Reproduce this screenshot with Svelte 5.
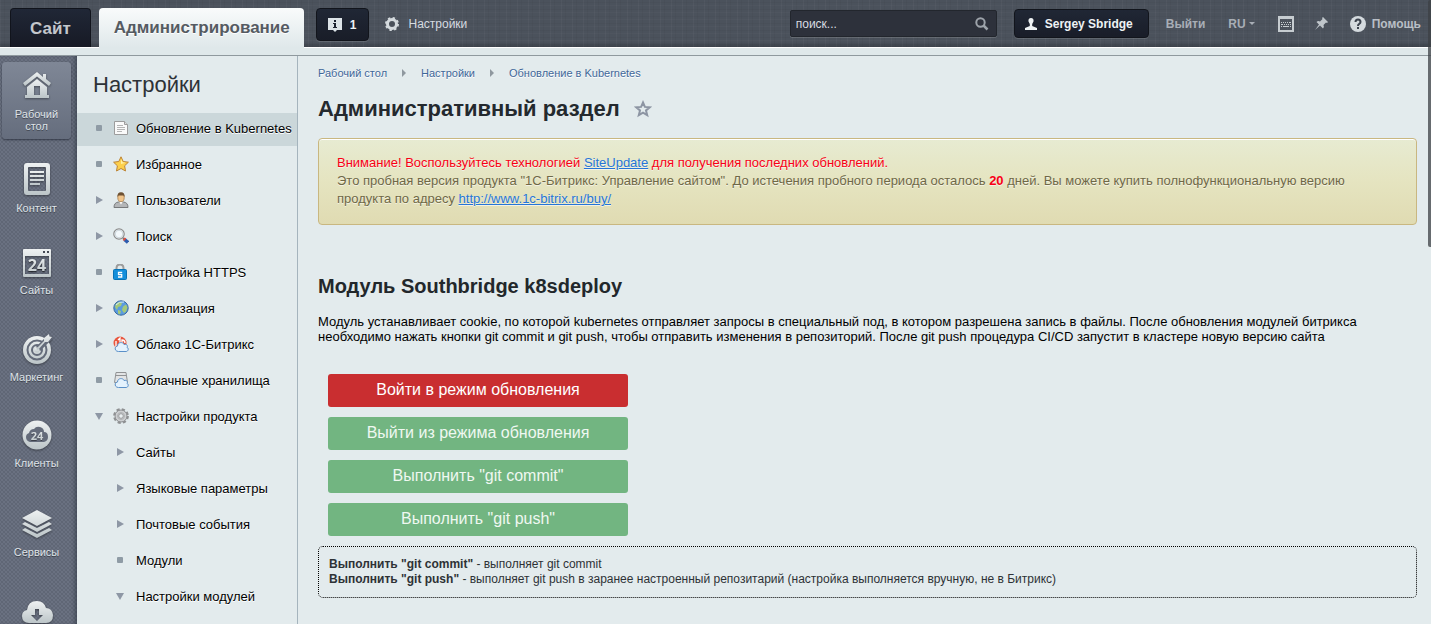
<script lang="ts">
  interface RailItem {
    label: string;
    width: number;
    height: number;
    art: string;
    active?: boolean;
  }

  interface MenuItem {
    label: string;
    marker: 'dot' | 'right' | 'down';
    icon?: string;
    sub?: boolean;
    selected?: boolean;
  }

  const rail: RailItem[] = [
    {
      label: 'Рабочий стол',
      width: 30,
      height: 28,
      active: true,
      art: '<path d="M15 1 1 12l2 3 12-9.500L27 15l2-3-5-4V3h-3v3z"/><path fill-rule="evenodd" d="M15 8 5 16v8H3v3h24v-3h-2v-8zm-3 7h6v9h-6z"/>',
    },
    {
      label: 'Контент',
      width: 28,
      height: 34,
      art: '<path fill-rule="evenodd" d="M4 1h20q3 0 3 3v26q0 3-3 3H4q-3 0-3-3V4q0-3 3-3zm2 4Q5 5 5 6v22q0 1 1 1h16q1 0 1-1V6q0-1-1-1z"/><path d="M7 9h14v2H7zm0 4h14v2H7zm0 4h14v2H7zm0 4h10v2H7z"/>',
    },
    {
      label: 'Сайты',
      width: 30,
      height: 32,
      art: '<path fill-rule="evenodd" d="M2 3h26q1 0 1 1v26q0 1-1 1H2q-1 0-1-1V4q0-1 1-1zm1 7v18h24V10zm18-5v2h2V5zm4 0v2h2V5z"/><text x="15" y="25" text-anchor="middle" font-size="16" font-weight="700">24</text>',
    },
    {
      label: 'Маркетинг',
      width: 30,
      height: 37,
      art: '<circle cx="15" cy="22" r="14"/><g fill="none" stroke="#646b7a" stroke-width="2"><circle cx="15" cy="22" r="9.500"/><circle cx="15" cy="22" r="5"/><path stroke-width="6" d="M16 21 28 9"/></g><circle cx="15" cy="22" r="2.500"/><path d="m14 21 8-8v-3l5-4 .5 2.500L30 9l-4 5h-3l-7 8z"/>',
    },
    {
      label: 'Клиенты',
      width: 30,
      height: 36,
      art: '<circle cx="15" cy="20" r="14.500"/><path fill="#646b7a" d="M8 27q-4-1-4-5 0-3 3-4 1-4 5-4 2-3 6-2 4 1 4 5 4 0 4 5 0 4-4 5z"/><text x="15" y="25" text-anchor="middle" font-size="11" font-weight="700">24</text>',
    },
    {
      label: 'Сервисы',
      width: 32,
      height: 39,
      art: '<path d="M16 9 1 17l15 8 15-8zM4 21l-3 2 15 8 15-8-3-2-12 6zM4 27l-3 2 15 8 15-8-3-2-12 6z"/>',
    },
    {
      label: 'Облако',
      width: 32,
      height: 34,
      art: '<path fill-rule="evenodd" d="M8 33q-7 0-7-7 0-5 5-6 1-9 10-9 7 0 9 7 6 0 7 7 0 8-7 8zm6-14v6h-4l6 6 6-6h-4v-6z"/>',
    },
  ];

  const cloud =
    '<path d="M5.500 15.500c-4 0-4.500-5-1-5.500C4.500 6 10 5.500 11 8.500c3-1 4 1.500 3 3 2 .5 1.500 4-1 4z" fill="#e4f2fd" stroke="#5a90c8"/>';

  const icons: Record<string, string> = {
    page: '<path d="M1.500 1.500h10l3 3v10h-13z" fill="#fafafa" stroke="#9c9c9c"/><path d="M11.500 1.500v3h3" fill="#ddd" stroke="#9c9c9c"/><path d="M4 5.500h6M4 7.500h8M4 9.500h8M4 11.500h5" stroke="#b5b5b5"/>',
    star: '<path d="m8 .8 2.200 4.700 5.200.7-3.800 3.600.9 5.200L8 12.500 3.500 15l.9-5.200L.6 6.200l5.200-.7z" fill="#fdd04c" stroke="#bd8434"/><path d="m8 3 1.500 3.300 3.300.5L8 8z" fill="#fff0a6"/>',
    user: '<path d="M1 15.500q0-5 4.500-5.500h5q4.500.5 4.500 5.500z" fill="#b4b6b8" stroke="#77797b"/><path d="m6 9.500 2 3 2-3z" fill="#fff"/><ellipse cx="8" cy="5.500" rx="3.200" ry="4.200" fill="#f1c58c" stroke="#a87c49" stroke-width=".8"/><path d="M4.500 5Q4 .3 8 .3T11.500 5L10.500 3.500h-5z" fill="#6e5133"/>',
    search: '<path d="m10 10 1.500 1.500" stroke="#777" stroke-width="2"/><path d="m11.500 11.500 3.500 3" stroke="#2d5cae" stroke-width="3.500"/><path d="m10.500 12.500 2-2.500" stroke="#e34d3d" stroke-width="2"/><circle cx="6" cy="6" r="5.200" fill="#f3f8fb" stroke="#8c8c8c" stroke-width="1.200"/><circle cx="6" cy="6" r="3.800" fill="none" stroke="#ccd6db"/>',
    lock: '<path d="M3.500 7V4q0-3.500 3.500-3.500T10.500 4v3" fill="none" stroke="#9c9c9c" stroke-width="2"/><rect x=".5" y="5.500" width="13" height="10" rx="1" fill="#148fdb" stroke="#0872b5"/><path d="M9.200 8.500H5.500v2.200h3.200V13H5" fill="none" stroke="#fff" stroke-width="1.300"/>',
    globe: '<circle cx="8" cy="8" r="7.200" fill="#5a9be0" stroke="#38699f"/><path d="M3 3.500 6 2l3 1-1 3-3 1-1 3-2-3zm7 3 3-2 1.500 3-1.500 4-2 1.500-2-3zM5 10l3 1-1 3.500-2-1z" fill="#a5c978"/><path d="M3 5q3-4 8-3" fill="none" stroke="#d5ecfb"/>',
    bitrix: '<circle cx="7" cy="7" r="6.500" fill="#e8563e"/><path d="M3 11V5m2-1 2-2v8M9 10V4a3 3 0 0 1 3 3" fill="none" stroke="#fff" stroke-width="1.300"/>' + cloud,
    storage: '<path d="M3 .5h10l1.500 10h-13z" fill="#e2e4e5" stroke="#909294"/><path d="M3 3.500h10" stroke="#909294"/>' + cloud,
    gear: '<circle cx="8" cy="8" r="6.500" fill="none" stroke="#8f9193" stroke-width="2.800" stroke-dasharray="3 2.105"/><circle cx="8" cy="8" r="6" fill="#cdcfd1" stroke="#8d8f91"/><circle cx="8" cy="8" r="3.500" fill="none" stroke="#b0b2b4"/><circle cx="8" cy="8" r="2.300" fill="#e9eef0" stroke="#8d8f91" stroke-width=".8"/>',
  };

  const menu: MenuItem[] = [
    { label: 'Обновление в Kubernetes', marker: 'dot', icon: 'page', selected: true },
    { label: 'Избранное', marker: 'dot', icon: 'star' },
    { label: 'Пользователи', marker: 'right', icon: 'user' },
    { label: 'Поиск', marker: 'right', icon: 'search' },
    { label: 'Настройка HTTPS', marker: 'dot', icon: 'lock' },
    { label: 'Локализация', marker: 'right', icon: 'globe' },
    { label: 'Облако 1С-Битрикс', marker: 'right', icon: 'bitrix' },
    { label: 'Облачные хранилища', marker: 'dot', icon: 'storage' },
    { label: 'Настройки продукта', marker: 'down', icon: 'gear' },
    { label: 'Сайты', marker: 'right', sub: true },
    { label: 'Языковые параметры', marker: 'right', sub: true },
    { label: 'Почтовые события', marker: 'right', sub: true },
    { label: 'Модули', marker: 'dot', sub: true },
    { label: 'Настройки модулей', marker: 'down', sub: true },
  ];

  const crumbs = ['Рабочий стол', 'Настройки', 'Обновление в Kubernetes'];

  const actions = [
    { label: 'Войти в режим обновления', danger: true },
    { label: 'Выйти из режима обновления' },
    { label: 'Выполнить "git commit"' },
    { label: 'Выполнить "git push"' },
  ];

  let query = $state('');
</script>

<div class="admin">
  <header class="topbar">
    <nav class="tabs">
      <a class="tab site" href="#site">Сайт</a>
      <a class="tab current" href="#admin">Администрирование</a>
    </nav>
    <button class="dark-btn notices" type="button" aria-label="Уведомления: 1">
      <svg width="14" height="14" viewBox="0 0 14 14">
        <path d="M0 0h14v12H9l-2 2-2-2H0z" fill="#dce3e7" />
        <path d="M6 2h2v2H6zM5 5h3v4h1v1H5V9h1V6H5z" fill="#1b212e" />
      </svg>
      <span>1</span>
    </button>
    <a class="prefs" href="#settings">
      <svg width="14" height="14" viewBox="0 0 14 14" fill="none" stroke="#d4dade">
        <circle cx="7" cy="7" r="4.500" stroke-width="3" />
        <circle cx="7" cy="7" r="6" stroke-width="2" stroke-dasharray="2.350" />
      </svg>
      Настройки
    </a>

    <div class="tools">
      <div class="search">
        <input type="text" placeholder="поиск..." aria-label="Поиск" bind:value={query} />
        <svg width="14" height="14" viewBox="0 0 14 14" fill="none" stroke="#9da3aa">
          <circle cx="5.500" cy="5.500" r="4.200" stroke-width="2" />
          <path d="m8.500 8.500 4 4" stroke-width="2.500" />
        </svg>
      </div>
      <button class="dark-btn user" type="button">
        <svg width="12" height="12" viewBox="0 0 12 12" fill="#eef2f4">
          <path d="M6 0q3 0 2.500 3.500L7.200 6v2L12 10v2H0v-2l4.800-2V6L3.500 3.500Q3 0 6 0z" />
        </svg>
        Sergey Sbridge
      </button>
      <a class="tool logout" href="#logout">Выйти</a>
      <button class="tool lang" type="button">RU <i class="caret"></i></button>
      <button class="tool keyboard" type="button" aria-label="Горячие клавиши">
        <svg width="16" height="16" viewBox="0 0 16 16" fill="#c6ccd0">
          <path fill-rule="evenodd" d="M0 0h16v16H0zm2 3v11h12V3z" />
          <path d="M3 6h1v1H3zm2 0h1v1H5zm2 0h1v1H7zm2 0h1v1H9zm2 0h2v1h-2zM3 8h2v1H3zm3 0h1v1H6zm2 0h1v1H8zm2 0h1v1h-1zm2 0h1v1h-1zM3 10h1v1H3zm2 0h6v1H5zm7 0h1v1h-1z" />
        </svg>
      </button>
      <button class="tool pin" type="button" aria-label="Закрепить панель">
        <svg width="15" height="15" viewBox="0 0 15 15" fill="#c0c6cb">
          <path d="m9 1 5 5-1 1-1-.5L9.500 9q1 2-.5 3.500L6 9.500 1 14l4-5.500L2.500 6Q4 4.500 6 5.500L8.500 3 8 2z" />
        </svg>
      </button>
      <a class="tool help" href="#help">
        <svg width="16" height="16" viewBox="0 0 16 16">
          <circle cx="8" cy="8" r="8" fill="#d4dade" />
          <path d="M5.500 6q0-2.500 2.500-2.500T10.500 6q0 1-1.300 1.800Q8 8.500 8 10" fill="none" stroke="#3c434e" stroke-width="2" />
          <path d="M7 11h2v2H7z" fill="#3c434e" />
        </svg>
        Помощь
      </a>
    </div>
  </header>

  <div class="body">
    <nav class="rail">
      {#each rail as item}
        <a class="rail-item" class:active={item.active} href="#rail">
          <svg width={item.width} height={item.height} viewBox="0 0 {item.width} {item.height}" fill="url(#metal)">
            {@html item.art}
          </svg>
          <span>{item.label}</span>
        </a>
      {/each}
      <svg class="defs" width="0" height="0" aria-hidden="true">
        <linearGradient id="metal" x1="0" y1="0" x2="0" y2="1">
          <stop offset="0" stop-color="#eef1f2" />
          <stop offset="1" stop-color="#bcc5c8" />
        </linearGradient>
      </svg>
    </nav>

    <aside class="menu">
      <h2>Настройки</h2>
      <ul>
        {#each menu as item}
          <li>
            <a class="menu-item" class:selected={item.selected} class:sub={item.sub} href="#menu">
              <span class="marker"><i class={item.marker}></i></span>
              {#if item.icon}
                <svg class="menu-icon" width="16" height="16" viewBox="0 0 16 16" fill="none">
                  {@html icons[item.icon]}
                </svg>
              {/if}
              <span>{item.label}</span>
            </a>
          </li>
        {/each}
      </ul>
    </aside>

    <main class="content">
      <nav class="crumbs">
        {#each crumbs as crumb, i}
          {#if i > 0}<i class="crumb-arrow"></i>{/if}
          <a href="#crumb">{crumb}</a>
        {/each}
      </nav>

      <div class="title">
        <h1>Административный раздел</h1>
        <button class="fav" type="button" aria-label="Добавить в избранное">
          <svg width="18" height="18" viewBox="0 0 18 18" fill="none" stroke="#8d95a3" stroke-width="2">
            <path d="m9 2.500 1.900 4.400 4.800.4-3.700 3.100 1.200 4.800L9 12.600l-4.200 2.600L6 10.400 2.300 7.300l4.800-.4z" />
          </svg>
        </button>
      </div>

      <div class="notice">
        <span class="warn">
          Внимание! Воспользуйтесь технологией <a href="#siteupdate">SiteUpdate</a> для получения последних обновлений.
        </span>
        <br />
        Это пробная версия продукта "1С-Битрикс: Управление сайтом". До истечения пробного периода осталось
        <b>20</b> дней. Вы можете купить полнофункциональную версию продукта по адресу
        <a href="#buy">http://www.1c-bitrix.ru/buy/</a>
      </div>

      <h3>Модуль Southbridge k8sdeploy</h3>
      <p class="about">
        Модуль устанавливает cookie, по которой kubernetes отправляет запросы в специальный под, в котором разрешена
        запись в файлы. После обновления модулей битрикса необходимо нажать кнопки git commit и git push, чтобы
        отправить изменения в репозиторий. После git push процедура CI/CD запустит в кластере новую версию сайта
      </p>

      <div class="actions">
        {#each actions as action}
          <button class="action" class:danger={action.danger} type="button">{action.label}</button>
        {/each}
      </div>

      <div class="legend">
        <b>Выполнить "git commit"</b> - выполняет git commit<br />
        <b>Выполнить "git push"</b> - выполняет git push в заранее настроенный репозитарий (настройка выполняется вручную,
        не в Битрикс)
      </div>
    </main>
  </div>

  <div class="scroll-thumb"></div>
</div>

<style>
  :global(body) {
    overflow: hidden;
  }

  .admin {
    position: relative;
    display: flex;
    flex-direction: column;
    height: 100vh;
    overflow: hidden;
    background: #e3ebed;
    color: #000;
    font-family: 'Liberation Sans', Arial, sans-serif;
    font-size: 13px;
  }

  a {
    color: inherit;
    text-decoration: none;
  }

  button {
    padding: 0;
    border: 0;
    background: none;
    font: inherit;
    color: inherit;
    cursor: pointer;
  }

  svg {
    display: block;
    flex-shrink: 0;
  }

  /* Top bar */
  .topbar {
    display: flex;
    flex-shrink: 0;
    align-items: flex-start;
    height: 48px;
    padding: 0 10px;
    border-bottom: 7px solid #dfe8ea;
    background:
      repeating-linear-gradient(90deg, rgba(255, 255, 255, 0.03) 0 1px, transparent 1px 4px, rgba(0, 0, 0, 0.03) 4px 5px, transparent 5px 11px),
      repeating-linear-gradient(0deg, rgba(255, 255, 255, 0.02) 0 1px, transparent 1px 3px, rgba(0, 0, 0, 0.03) 3px 4px, transparent 4px 7px),
      linear-gradient(#4b525c 42px, #3c424b 47px);
    box-shadow:
      inset 0 -1px #fff,
      0 1px #8f999e;
    z-index: 1;
  }

  .tabs {
    display: flex;
    gap: 8px;
    padding-top: 8px;
  }

  .tab {
    box-sizing: border-box;
    height: 39px;
    border-radius: 4px 4px 0 0;
    font-size: 17px;
    font-weight: bold;
    line-height: 40px;
  }

  .site {
    padding: 0 19px;
    border: 1px solid #11141c;
    border-bottom: 0;
    background: linear-gradient(#202736, #171a25);
    color: #c3c7cc;
  }

  .current {
    height: 40px;
    padding: 0 14px 0 15px;
    background: linear-gradient(#f9fbfb, #dfe8ea);
    color: #555b62;
    text-shadow: 0 1px #fff;
  }

  .dark-btn {
    display: flex;
    align-items: center;
    box-sizing: border-box;
    border: 1px solid #12151c;
    border-radius: 4px;
    background: linear-gradient(#202735, #191d28);
    box-shadow: 0 1px rgba(255, 255, 255, 0.12);
    color: #eef2f4;
    font-size: 12px;
    font-weight: bold;
  }

  .notices {
    gap: 8px;
    height: 33px;
    margin: 8px 0 0 12px;
    padding: 0 12px 0 11px;
  }

  .prefs {
    display: flex;
    align-items: center;
    gap: 9px;
    height: 47px;
    margin-left: 16px;
    color: #d6dbe0;
    font-size: 12px;
  }

  .tools {
    display: flex;
    align-items: center;
    height: 47px;
    margin-left: auto;
    color: #a8aeb6;
    font-size: 12px;
    font-weight: bold;
  }

  .search {
    display: flex;
    align-items: center;
    box-sizing: border-box;
    width: 207px;
    height: 27px;
    margin-right: 17px;
    padding: 0 7px 0 5px;
    border: 1px solid #22262d;
    border-radius: 2px;
    background: #2d313b;
    box-shadow: 0 1px rgba(255, 255, 255, 0.15);
  }

  .search input {
    flex: 1;
    min-width: 0;
    padding: 0;
    border: 0;
    outline: 0;
    background: none;
    color: #d9dde1;
    font: 12px 'Liberation Sans', Arial, sans-serif;
  }

  .search input::placeholder {
    color: #d9dde1;
  }

  .user {
    gap: 8px;
    height: 29px;
    margin-right: 17px;
    padding: 0 15px 0 10px;
  }

  .tool {
    display: flex;
    align-items: center;
  }

  .logout {
    margin-right: 23px;
  }

  .lang {
    gap: 3px;
    margin-right: 23px;
  }

  .keyboard {
    margin-right: 20px;
  }

  .pin {
    margin-right: 21px;
  }

  .help {
    gap: 6px;
    color: #b9bfc6;
  }

  .caret {
    border: 3px solid transparent;
    border-top-color: #a8aeb6;
    border-bottom: 0;
  }

  /* Left rail */
  .body {
    display: flex;
    flex: 1;
    min-height: 0;
    padding-top: 1px;
  }

  .rail {
    display: flex;
    flex-direction: column;
    flex-shrink: 0;
    box-sizing: border-box;
    width: 77px;
    padding: 6px 6px 0 2px;
    overflow: hidden;
    background:
      radial-gradient(circle, rgba(40, 46, 60, 0.16) 1px, transparent 1px) 0 0 / 4px 4px,
      radial-gradient(circle, rgba(40, 46, 60, 0.16) 1px, transparent 1px) 2px 2px / 4px 4px,
      #6a7181;
    box-shadow: inset -4px 0 4px -2px rgba(40, 48, 60, 0.6);
  }

  .rail-item {
    display: flex;
    flex-direction: column;
    flex-shrink: 0;
    align-items: center;
    gap: 6px;
    padding: 16px 0;
    border-radius: 4px;
    color: #dfe3e8;
    font-size: 11px;
    line-height: 12px;
    text-align: center;
    text-shadow: 0 1px rgba(0, 0, 0, 0.4);
  }

  .rail-item svg {
    filter: drop-shadow(0 1px 1px rgba(0, 0, 0, 0.4));
    font-family: 'Open Sans', sans-serif;
  }

  .rail-item.active {
    gap: 9px;
    margin-bottom: 7px;
    padding: 9px 8px 7px;
    background: linear-gradient(#7f8796, #656d7d);
    box-shadow: 0 1px 2px rgba(30, 36, 48, 0.7);
  }

  .defs {
    position: absolute;
  }

  /* Section menu */
  .menu {
    flex-shrink: 0;
    box-sizing: border-box;
    width: 221px;
    overflow: hidden;
    border-right: 1px solid #a5b4bd;
  }

  .menu h2 {
    margin: 0;
    padding: 0 16px;
    color: #2d3237;
    font-size: 22px;
    font-weight: normal;
    line-height: 57px;
  }

  .menu ul {
    display: flex;
    flex-direction: column;
    gap: 3px;
    margin: 0;
    padding: 0;
    list-style: none;
  }

  .menu-item {
    display: flex;
    align-items: center;
    box-sizing: border-box;
    height: 33px;
    padding: 0 0 3px 16px;
    text-shadow: 0 1px #fff;
    white-space: nowrap;
  }

  .menu-item.selected {
    background: #cbd7da;
  }

  .menu-item.sub {
    padding-left: 37px;
  }

  .marker {
    display: flex;
    justify-content: center;
    width: 12px;
    margin-right: 8px;
  }

  .sub .marker {
    margin-right: 10px;
  }

  .dot {
    width: 6px;
    height: 6px;
    border-radius: 1px;
    background: #8f9ba5;
  }

  .right {
    border: 4px solid transparent;
    border-left: 7px solid #8e97a5;
    border-right: 0;
  }

  .down {
    border: 4px solid transparent;
    border-top: 7px solid #8e97a5;
    border-bottom: 0;
  }

  .menu-icon {
    margin-right: 7px;
  }

  /* Content */
  .content {
    flex: 1;
    min-width: 0;
    padding: 10px 14px 0 20px;
  }

  .crumbs {
    display: flex;
    align-items: center;
    gap: 15px;
    color: #3f6799;
    font-size: 11px;
    line-height: 14px;
    text-shadow: 0 1px #fff;
  }

  .crumb-arrow {
    border: 4px solid transparent;
    border-left-color: #8f989f;
    border-right: 0;
  }

  .title {
    display: flex;
    align-items: center;
    gap: 14px;
    margin: 15px 0 16px;
  }

  h1 {
    margin: 0;
    color: #24292e;
    font-size: 22px;
    line-height: 27px;
  }

  .notice {
    padding: 15px 18px 16px;
    border: 1px solid #c9b780;
    border-radius: 4px;
    background: linear-gradient(#e7ebd2, #e5e4c0 50%, #e0dbb2);
    box-shadow: inset 0 1px #fff;
    color: #6f6846;
    line-height: 18px;
    text-shadow: 0 1px rgba(255, 255, 255, 0.6);
  }

  .notice a {
    color: #2675d7;
    text-decoration: underline;
  }

  .warn,
  .notice b {
    color: #f80015;
  }

  h3 {
    margin: 49px 0 16px;
    color: #22272b;
    font-size: 20px;
    line-height: 24px;
  }

  .about {
    margin: 0 0 30px;
    line-height: 15px;
  }

  .actions {
    display: flex;
    flex-direction: column;
    gap: 10px;
    width: 300px;
    margin: 0 10px 10px;
  }

  .action {
    height: 33px;
    padding-bottom: 2px;
    border-radius: 3px;
    background: #72b581;
    color: #eff8f1;
    font-size: 16px;
  }

  .action.danger {
    background: #c92e30;
    color: #fff;
  }

  .legend {
    padding: 10px;
    border: 1px dotted #000;
    border-radius: 5px;
    color: #2e3236;
    font-size: 12px;
    line-height: 15px;
  }

  .scroll-thumb {
    position: absolute;
    top: 0;
    right: 0;
    z-index: 2;
    width: 3px;
    height: 247px;
    border-radius: 2px 0 0 2px;
    background: rgba(60, 64, 68, 0.75);
  }
</style>
